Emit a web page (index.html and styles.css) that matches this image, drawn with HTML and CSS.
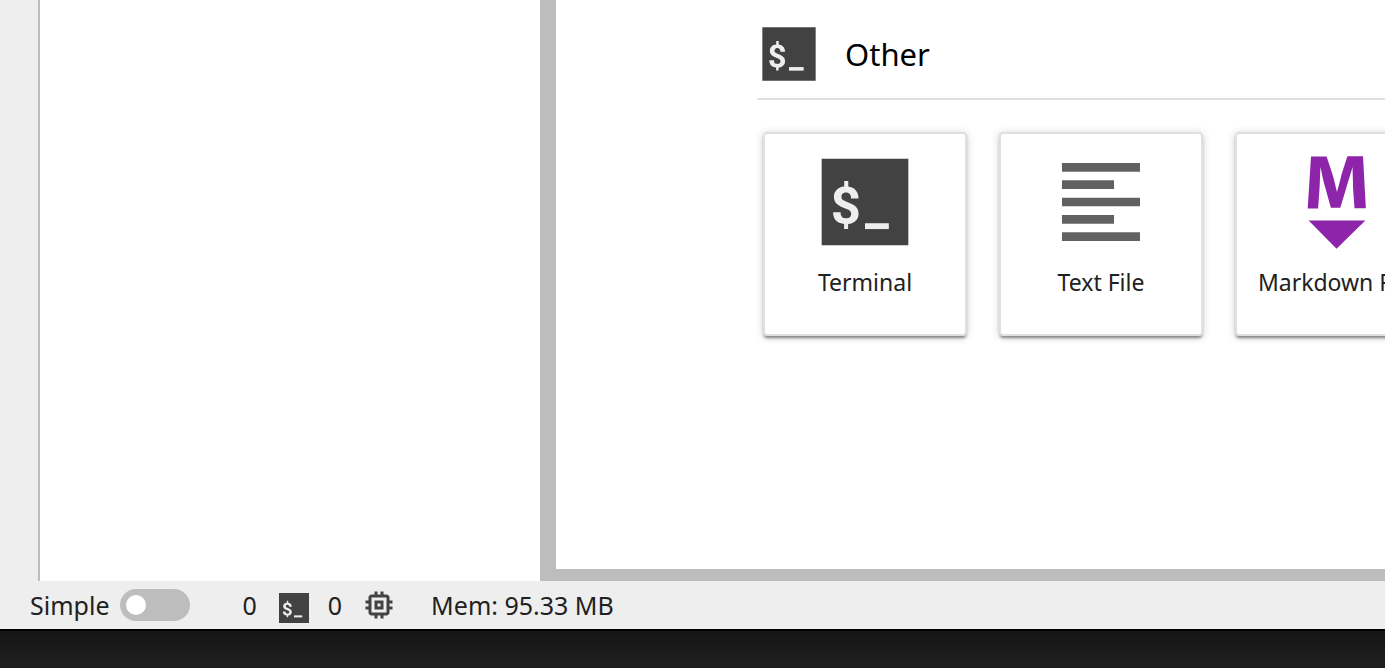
FILE: index.html
```html
<!DOCTYPE html>
<html lang="en">
<head>
<meta charset="utf-8">
<title>JupyterLab</title>
<link rel="stylesheet" href="styles.css">
</head>
<body>
<svg class="symbols" aria-hidden="true">
  <symbol id="terminal" viewBox="0 0 24 24">
    <path fill="#424242" d="M2 2h20v20H2z"/>
    <path fill="#eee" transform="translate(3.75 6.05)" d="M5.057 8.762C5.057 8.598 5.031 8.453 4.98 8.328C4.934 8.199 4.855 8.082 4.746 7.977C4.641 7.871 4.5 7.775 4.324 7.689C4.152 7.6 3.943 7.512 3.697 7.426C3.303 7.285 2.943 7.137 2.619 6.98C2.295 6.824 2.018 6.643 1.787 6.436C1.561 6.229 1.385 5.988 1.26 5.715C1.135 5.438 1.072 5.109 1.072 4.73C1.072 4.398 1.129 4.096 1.242 3.822C1.355 3.545 1.516 3.305 1.723 3.102C1.93 2.898 2.18 2.734 2.473 2.609C2.766 2.484 3.092 2.404 3.451 2.369V1.109H4.389V2.381C4.744 2.428 5.068 2.523 5.361 2.668C5.654 2.813 5.902 3.002 6.105 3.236C6.313 3.467 6.473 3.74 6.586 4.057C6.699 4.373 6.758 4.727 6.758 5.117H5.027C5.027 4.672 4.926 4.332 4.723 4.098C4.52 3.859 4.246 3.74 3.902 3.74C3.715 3.74 3.553 3.768 3.416 3.82C3.279 3.869 3.166 3.94 3.076 4.033C2.986 4.12 2.92 4.225 2.877 4.344C2.838 4.463 2.818 4.594 2.818 4.736C2.818 4.88 2.838 5.006 2.877 5.115C2.92 5.22 2.992 5.32 3.094 5.414C3.195 5.508 3.33 5.6 3.498 5.69C3.666 5.775 3.877 5.865 4.131 5.96C4.521 6.107 4.879 6.26 5.203 6.416C5.527 6.568 5.805 6.748 6.035 6.955C6.266 7.16 6.443 7.4 6.568 7.676C6.697 7.95 6.762 8.27 6.762 8.65C6.762 8.996 6.705 9.31 6.592 9.59C6.479 9.86 6.316 10.1 6.105 10.3C5.895 10.5 5.641 10.66 5.344 10.79C5.047 10.91 4.717 10.98 4.354 11.02V12.16H3.422V11.02C3.098 10.99 2.783 10.92 2.479 10.82C2.174 10.71 1.902 10.55 1.664 10.34C1.43 10.13 1.24 9.86 1.096 9.54C.951 9.2.879 8.8.879 8.33H2.615C2.615 8.61 2.656 8.85 2.738 9.04C2.82 9.23 2.926 9.38 3.055 9.5C3.188 9.57 3.34 9.62 3.512 9.65C3.684 9.68 3.861 9.69 3.961 9.69C4.65 9.69 5.057 9.3 5.057 8.762Z"/>
    <path fill="#eee" d="M12 16.9h5.5v1.35H12z"/>
  </symbol>
  <symbol id="text-file" viewBox="0 0 24 24">
    <path fill="#616161" d="M15 15H3v2h12v-2zm0-8H3v2h12V7zM3 13h18v-2H3v2zm0 8h18v-2H3v2zM3 3v2h18V3H3z"/>
  </symbol>
  <symbol id="markdown" viewBox="0 0 22 22">
    <path fill="#8e24aa" d="M5 14.9h12l-6.1 6zm9.4-6.8c0-1.3-.1-2.9-.1-4.5-.4 1.4-.9 2.9-1.3 4.3l-1.3 4.3h-2L8.5 7.9c-.4-1.3-.7-2.9-1-4.3-.1 1.6-.1 3.2-.2 4.6L7 12.4H4.8l.7-11h3.3L10 5c.4 1.2.7 2.7 1 3.9.3-1.2.7-2.6 1-3.9l1.2-3.7h3.3l.6 11h-2.4z"/>
  </symbol>
  <symbol id="kernel" viewBox="0 0 24 24">
    <path fill="#424242" d="M15 9H9v6h6V9zm-2 4h-2v-2h2v2zm8-2V9h-2V7c0-1.1-.9-2-2-2h-2V3h-2v2h-2V3H9v2H7c-1.1 0-2 .9-2 2v2H3v2h2v2H3v2h2v2c0 1.1.9 2 2 2h2v2h2v-2h2v2h2v-2h2c1.1 0 2-.9 2-2v-2h2v-2h-2v-2h2zm-4 6H7V7h10v10z"/>
  </symbol>
</svg>
<div class="app">
  <div class="workspace">
    <nav class="rail" aria-label="Sidebar"></nav>
    <aside class="panel"></aside>
    <main class="launcher">
      <section class="section">
        <header class="section-header">
          <svg class="section-icon" aria-hidden="true"><use href="#terminal"/></svg>
          <h2 class="section-title">Other</h2>
        </header>
        <div class="cards">
          <button class="card" type="button">
            <svg class="card-icon" aria-hidden="true"><use href="#terminal"/></svg>
            <span class="card-label">Terminal</span>
          </button>
          <button class="card" type="button">
            <svg class="card-icon" aria-hidden="true"><use href="#text-file"/></svg>
            <span class="card-label">Text File</span>
          </button>
          <button class="card" type="button">
            <svg class="card-icon" aria-hidden="true"><use href="#markdown"/></svg>
            <span class="card-label">Markdown File</span>
          </button>
        </div>
      </section>
    </main>
  </div>
  <footer class="status">
    <label class="mode" for="simple">Simple
      <input class="switch" id="simple" type="checkbox" role="switch">
    </label>
    <div class="sessions">
      <span>0</span>
      <svg class="status-icon terminals" aria-hidden="true"><use href="#terminal"/></svg>
      <span>0</span>
      <svg class="status-icon" aria-hidden="true"><use href="#kernel"/></svg>
    </div>
    <span class="memory">Mem: 95.33 MB</span>
  </footer>
  <div class="desktop"></div>
</div>
</body>
</html>
```
FILE: styles.css
```css
* {
  box-sizing: border-box;
}

body {
  margin: 0;
  font-family: "Noto Sans", "Open Sans", sans-serif;
  color: #212121;
  background: #fff;
}

.symbols {
  display: none;
}

.app {
  display: flex;
  flex-direction: column;
  height: 100vh;
  overflow: hidden;
}

.workspace {
  display: flex;
  flex: 1;
  min-height: 0;
}

.rail {
  flex: none;
  width: 40px;
  background: #eee;
  border-right: 2px solid #bdbdbd;
}

.panel {
  flex: none;
  width: 500px;
  background: #fff;
}

.launcher {
  flex: 1;
  min-width: 0;
  overflow: hidden;
  padding: 10px 0 0 201px;
  background: #fff;
  border-left: 16px solid #bdbdbd;
  border-bottom: 12px solid #bdbdbd;
}

.section-header {
  display: flex;
  align-items: center;
  gap: 24px;
  height: 90px;
  border-bottom: 2px solid #e0e0e0;
}

.section-icon {
  width: 64px;
  height: 64px;
}

.section-title {
  margin: 0;
  font-size: 31px;
  font-weight: 400;
  line-height: 40px;
  color: #000;
}

.cards {
  display: flex;
  gap: 32px;
  padding: 32px 6px;
}

.card {
  display: flex;
  flex: none;
  flex-direction: column;
  align-items: center;
  gap: 12px;
  width: 204px;
  height: 204px;
  padding: 16px 0;
  font: inherit;
  color: inherit;
  background: #fff;
  border: 2px solid #e0e0e0;
  border-radius: 4px;
  box-shadow: 0 3px 3px -1px rgba(0, 0, 0, 0.44), 0 1px 8px rgba(0, 0, 0, 0.18);
}

.card-icon {
  width: 104px;
  height: 104px;
}

.card-label {
  font-size: 23px;
  line-height: 32px;
  white-space: nowrap;
}

.status {
  display: flex;
  align-items: center;
  height: 48px;
  padding-left: 30px;
  font-size: 25px;
  line-height: 32px;
  white-space: nowrap;
  background: #eee;
}

.mode {
  display: flex;
  align-items: center;
  gap: 11px;
}

.switch {
  width: 70px;
  height: 32px;
  margin: 0;
  padding: 6px;
  appearance: none;
  background: #bdbdbd;
  border-radius: 16px;
}

.switch::before {
  display: block;
  width: 20px;
  height: 20px;
  content: "";
  background: #fff;
  border-radius: 50%;
}

.switch:checked::before {
  margin-left: auto;
}

.sessions {
  display: flex;
  align-items: center;
  gap: 19px;
  margin-left: 52px;
}

.status-icon {
  width: 36px;
  height: 36px;
}

.terminals {
  margin: 6px -3px 0 0;
}

.memory {
  margin-left: 34px;
}

.desktop {
  height: 39px;
  background: linear-gradient(#151515, #202020);
  border-top: 2px solid #000;
}
```
